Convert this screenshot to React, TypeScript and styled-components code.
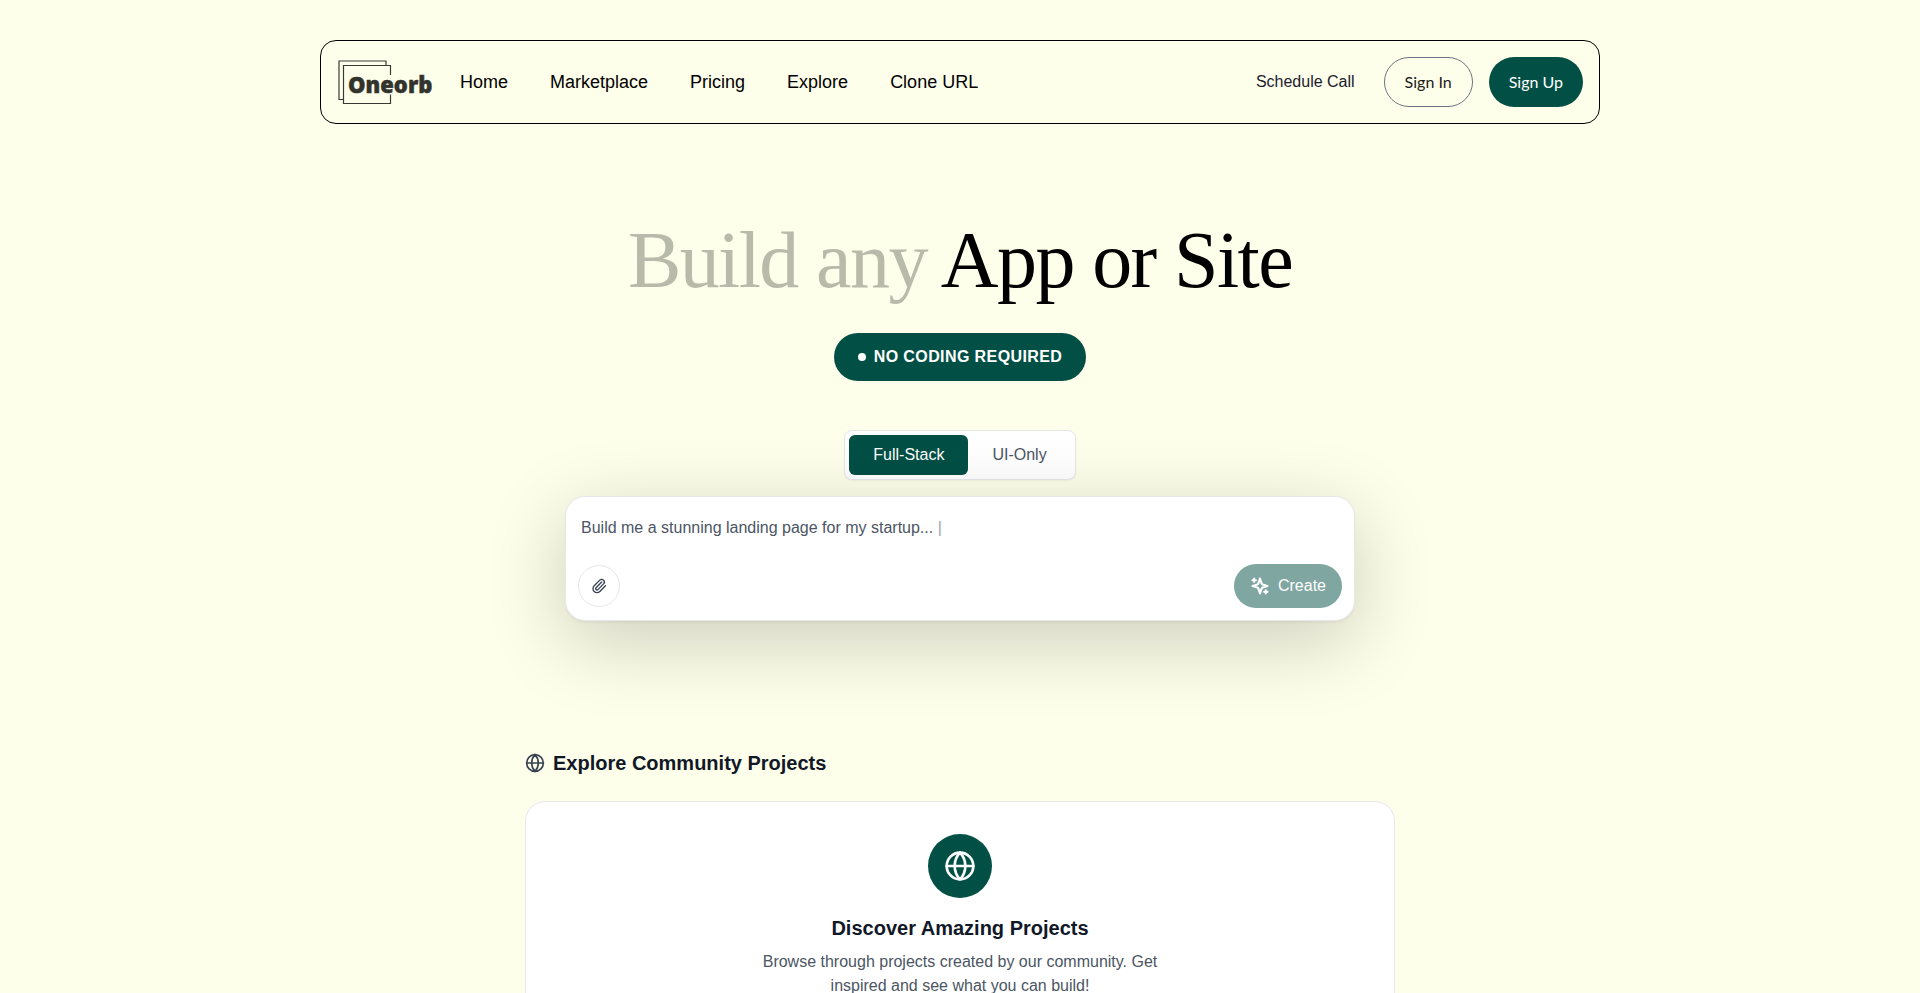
import React, { useState } from "react";
import styled, { createGlobalStyle } from "styled-components";
import { Globe, Paperclip } from "lucide-react";

const GlobalStyle = createGlobalStyle`
  *, *::before, *::after { box-sizing: border-box; }
  html { scrollbar-width: none; }
  body { margin: 0; background: #feffea; font-family: "Liberation Sans", Arial, sans-serif; font-size: 16px; line-height: 24px; }
  h1, h2, h3, p { margin: 0; }
  button, textarea { font: inherit; }
  button { cursor: pointer; }
`;

const Page = styled.div`
  height: 100vh;
  overflow-y: auto;
  scrollbar-width: none;
  padding: 40px 16px;
`;

const Header = styled.header`
  display: flex;
  align-items: center;
  max-width: 1280px;
  height: 84px;
  margin: 0 auto;
  padding: 0 16px;
  border: 1px solid #000;
  border-radius: 16px;
`;

const LogoLink = styled.a`
  display: flex;
  margin-right: 26px;
`;

const Nav = styled.nav`
  display: flex;
  flex: 1;
  gap: 42px;
`;

const NavLink = styled.a`
  color: #000;
  font-size: 18px;
  line-height: 28px;
  text-decoration: none;
`;

const Actions = styled.div`
  display: flex;
  align-items: center;
  gap: 16px;
`;

const ScheduleLink = styled.a`
  margin-right: 13px;
  color: #1a1a2e;
  text-decoration: none;
`;

const AuthButton = styled.button<{ $filled?: boolean }>`
  height: 50px;
  padding: 0 20px;
  border: ${(p) => (p.$filled ? "0" : "1px solid #6b7280")};
  border-radius: 25px;
  background: ${(p) => (p.$filled ? "#024f45" : "transparent")};
  color: ${(p) => (p.$filled ? "#fff" : "#1a1a1a")};
  font-family: Lato, sans-serif;
`;

const Hero = styled.section`
  display: flex;
  flex-direction: column;
  align-items: center;
  padding-top: 96px;
`;

const Headline = styled.h1`
  font-family: "Liberation Serif", "Times New Roman", serif;
  font-size: 80px;
  font-weight: 400;
  line-height: 80px;
  letter-spacing: -0.02em;
  text-align: center;
`;

const Muted = styled.span`
  color: #b9bbaa;
`;

const Badge = styled.div`
  display: flex;
  align-items: center;
  gap: 8px;
  margin-top: 33px;
  padding: 12px 24px;
  border-radius: 24px;
  background: #024f45;
  color: #fff;
  font-weight: 700;
  letter-spacing: 0.025em;
`;

const Dot = styled.span`
  width: 8px;
  height: 8px;
  border-radius: 50%;
  background: #fff;
`;

const ModeSwitch = styled.div`
  display: flex;
  margin-top: 49px;
  padding: 4px;
  border: 1px solid #e5e7eb;
  border-radius: 8px;
  background: #fff;
  box-shadow: 0 1px 2px rgba(0, 0, 0, 0.05);
`;

const ModeButton = styled.button<{ $active: boolean }>`
  height: 40px;
  padding: 0 24px;
  border: 0;
  border-radius: 6px;
  background: ${(p) => (p.$active ? "#024f45" : "transparent")};
  color: ${(p) => (p.$active ? "#fff" : "#4b5563")};
`;

const PromptBox = styled.form`
  position: relative;
  width: 100%;
  max-width: 790px;
  margin-top: 16px;
  padding: 12px;
  border: 1px solid #e5e7eb;
  border-radius: 20px;
  background: #fff;
  box-shadow: 0 20px 80px rgba(0, 0, 0, 0.2), 0 2px 2px rgba(0, 0, 0, 0.04);
`;

const PromptField = styled.div`
  position: relative;
  height: 47px;
`;

const PromptInput = styled.textarea`
  display: block;
  width: 100%;
  height: 100%;
  padding: 7px 3px;
  border: 0;
  outline: 0;
  resize: none;
  background: transparent;
  color: #111827;
`;

const PromptHint = styled.div`
  position: absolute;
  inset: 0;
  padding: 7px 3px;
  color: #4b5563;
  pointer-events: none;
`;

const Caret = styled.span`
  color: #9ca3af;
`;

const PromptActions = styled.div`
  display: flex;
  align-items: center;
  justify-content: space-between;
  margin-top: 8px;
`;

const AttachButton = styled.button`
  display: flex;
  align-items: center;
  justify-content: center;
  width: 42px;
  height: 42px;
  padding: 0;
  border: 1px solid #e5e7eb;
  border-radius: 50%;
  background: #fff;
  color: #374151;
`;

const CreateButton = styled.button`
  display: flex;
  align-items: center;
  gap: 8px;
  height: 44px;
  padding: 0 16px;
  border: 0;
  border-radius: 22px;
  background: #024f45;
  color: #fff;
  opacity: 0.5;
`;

const Community = styled.section`
  max-width: 870px;
  margin: 0 auto;
  padding-top: 128px;
`;

const SectionTitle = styled.h2`
  display: flex;
  align-items: center;
  gap: 8px;
  color: #111827;
  font-size: 20px;
  line-height: 28px;
  svg { color: #374151; }
`;

const Card = styled.div`
  display: flex;
  flex-direction: column;
  align-items: center;
  margin-top: 24px;
  padding: 32px;
  border: 1px solid #e5e7eb;
  border-radius: 20px;
  background: #fff;
  text-align: center;
`;

const IconCircle = styled.div`
  display: flex;
  align-items: center;
  justify-content: center;
  width: 64px;
  height: 64px;
  border-radius: 50%;
  background: #024f45;
  color: #fff;
`;

const CardTitle = styled.h3`
  margin-top: 16px;
  color: #111827;
  font-size: 20px;
  line-height: 28px;
`;

const CardText = styled.p`
  max-width: 448px;
  margin-top: 8px;
  color: #4b5563;
`;

const Logo = () => (
  <svg width="97" height="46" viewBox="0 0 97 46" role="img" aria-label="Oneorb">
    <g fill="none" stroke="#3a3a34" strokeWidth="1.200">
      <path d="M6 40.500H2V2H49V6" />
      <path d="M53.500 16V6.500H6.500V44.500H53.500V35.500" />
    </g>
    <text x="11" y="34" fill="#33332e" stroke="#33332e" strokeWidth="0.500" fontFamily="'Noto Sans', sans-serif" fontSize="22" fontWeight="900">
      Oneorb
    </text>
  </svg>
);

const SparklesIcon = () => (
  <svg width="20" height="20" viewBox="0 0 24 24" fill="none" stroke="currentColor" strokeWidth="2.500" strokeLinecap="round" strokeLinejoin="round" aria-hidden="true">
    <path d="M12 3l-1.900 5.800a2 2 0 0 1-1.300 1.300L3 12l5.800 1.900a2 2 0 0 1 1.300 1.300L12 21l1.900-5.800a2 2 0 0 1 1.300-1.300L21 12l-5.800-1.900a2 2 0 0 1-1.300-1.300Z" />
    <path d="M5 3v4M3 5h4M19 17v4M17 19h4" />
  </svg>
);

const navItems = ["Home", "Marketplace", "Pricing", "Explore", "Clone URL"];
const modes = ["Full-Stack", "UI-Only"];

export default function App() {
  const [mode, setMode] = useState(modes[0]);
  const [prompt, setPrompt] = useState("");
  return (
    <Page>
      <GlobalStyle />
      <Header>
        <LogoLink href="#">
          <Logo />
        </LogoLink>
        <Nav>
          {navItems.map((item) => (
            <NavLink key={item} href="#">{item}</NavLink>
          ))}
        </Nav>
        <Actions>
          <ScheduleLink href="#">Schedule Call</ScheduleLink>
          <AuthButton type="button">Sign In</AuthButton>
          <AuthButton type="button" $filled>Sign Up</AuthButton>
        </Actions>
      </Header>
      <main>
        <Hero>
          <Headline><Muted>Build any</Muted> App or Site</Headline>
          <Badge><Dot />NO CODING REQUIRED</Badge>
          <ModeSwitch>
            {modes.map((m) => (
              <ModeButton key={m} type="button" $active={m === mode} aria-pressed={m === mode} onClick={() => setMode(m)}>
                {m}
              </ModeButton>
            ))}
          </ModeSwitch>
          <PromptBox onSubmit={(e) => e.preventDefault()}>
            <PromptField>
              <PromptInput aria-label="Project description" value={prompt} onChange={(e) => setPrompt(e.target.value)} />
              {prompt === "" && (
                <PromptHint>
                  Build me a stunning landing page for my startup... <Caret>|</Caret>
                </PromptHint>
              )}
            </PromptField>
            <PromptActions>
              <AttachButton type="button" aria-label="Attach file"><Paperclip size={16} /></AttachButton>
              <CreateButton type="submit" disabled={prompt === ""}><SparklesIcon />Create</CreateButton>
            </PromptActions>
          </PromptBox>
        </Hero>
        <Community>
          <SectionTitle><Globe size={20} />Explore Community Projects</SectionTitle>
          <Card>
            <IconCircle><Globe size={32} /></IconCircle>
            <CardTitle>Discover Amazing Projects</CardTitle>
            <CardText>Browse through projects created by our community. Get inspired and see what you can build!</CardText>
          </Card>
        </Community>
      </main>
    </Page>
  );
}
